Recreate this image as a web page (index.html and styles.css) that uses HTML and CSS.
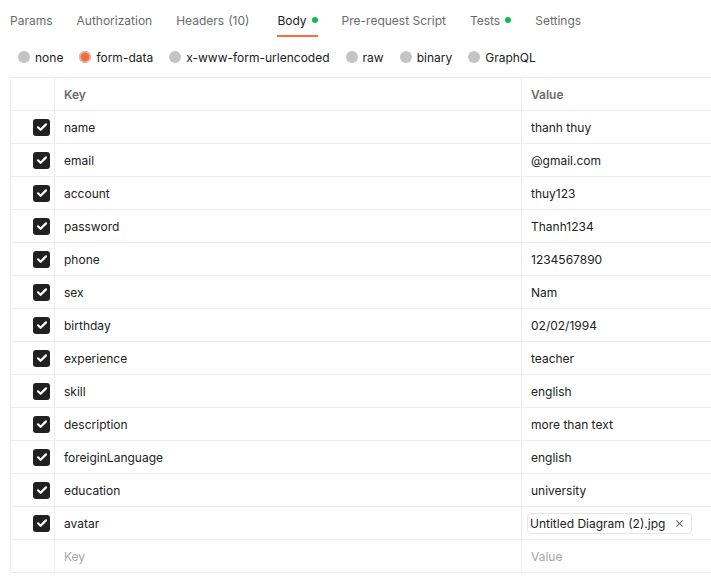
FILE: index.html
```html
<!DOCTYPE html>
<html>
<head>
<meta charset="utf-8">
<link rel="stylesheet" href="styles.css">
</head>
<body>
<div class="page">
  <nav class="tabs">
    <span class="tab">Params</span>
    <span class="tab">Authorization</span>
    <span class="tab">Headers <span class="count">(10)</span></span>
    <span class="tab active">Body<span class="dot"></span></span>
    <span class="tab">Pre-request Script</span>
    <span class="tab">Tests<span class="dot"></span></span>
    <span class="tab">Settings</span>
  </nav>
  <div class="radios">
    <span class="radio"><span class="circle"></span>none</span>
    <span class="radio"><span class="circle on"></span>form-data</span>
    <span class="radio"><span class="circle"></span>x-www-form-urlencoded</span>
    <span class="radio"><span class="circle"></span>raw</span>
    <span class="radio"><span class="circle"></span>binary</span>
    <span class="radio"><span class="circle"></span>GraphQL</span>
  </div>
  <div class="table">
    <div class="row head">
      <div class="c-check"></div>
      <div class="c-key">Key</div>
      <div class="c-val">Value</div>
    </div>
    <div class="row"><div class="c-check"><span class="cb"><svg viewBox="0 0 16 16"><path d="M4 8.3l2.6 2.5L12 5.4"/></svg></span></div><div class="c-key">name</div><div class="c-val">thanh thuy</div></div>
    <div class="row"><div class="c-check"><span class="cb"><svg viewBox="0 0 16 16"><path d="M4 8.3l2.6 2.5L12 5.4"/></svg></span></div><div class="c-key">email</div><div class="c-val">@gmail.com</div></div>
    <div class="row"><div class="c-check"><span class="cb"><svg viewBox="0 0 16 16"><path d="M4 8.3l2.6 2.5L12 5.4"/></svg></span></div><div class="c-key">account</div><div class="c-val">thuy123</div></div>
    <div class="row"><div class="c-check"><span class="cb"><svg viewBox="0 0 16 16"><path d="M4 8.3l2.6 2.5L12 5.4"/></svg></span></div><div class="c-key">password</div><div class="c-val">Thanh1234</div></div>
    <div class="row"><div class="c-check"><span class="cb"><svg viewBox="0 0 16 16"><path d="M4 8.3l2.6 2.5L12 5.4"/></svg></span></div><div class="c-key">phone</div><div class="c-val">1234567890</div></div>
    <div class="row"><div class="c-check"><span class="cb"><svg viewBox="0 0 16 16"><path d="M4 8.3l2.6 2.5L12 5.4"/></svg></span></div><div class="c-key">sex</div><div class="c-val">Nam</div></div>
    <div class="row"><div class="c-check"><span class="cb"><svg viewBox="0 0 16 16"><path d="M4 8.3l2.6 2.5L12 5.4"/></svg></span></div><div class="c-key">birthday</div><div class="c-val">02/02/1994</div></div>
    <div class="row"><div class="c-check"><span class="cb"><svg viewBox="0 0 16 16"><path d="M4 8.3l2.6 2.5L12 5.4"/></svg></span></div><div class="c-key">experience</div><div class="c-val">teacher</div></div>
    <div class="row"><div class="c-check"><span class="cb"><svg viewBox="0 0 16 16"><path d="M4 8.3l2.6 2.5L12 5.4"/></svg></span></div><div class="c-key">skill</div><div class="c-val">english</div></div>
    <div class="row"><div class="c-check"><span class="cb"><svg viewBox="0 0 16 16"><path d="M4 8.3l2.6 2.5L12 5.4"/></svg></span></div><div class="c-key">description</div><div class="c-val">more than text</div></div>
    <div class="row"><div class="c-check"><span class="cb"><svg viewBox="0 0 16 16"><path d="M4 8.3l2.6 2.5L12 5.4"/></svg></span></div><div class="c-key">foreiginLanguage</div><div class="c-val">english</div></div>
    <div class="row"><div class="c-check"><span class="cb"><svg viewBox="0 0 16 16"><path d="M4 8.3l2.6 2.5L12 5.4"/></svg></span></div><div class="c-key">education</div><div class="c-val">university</div></div>
    <div class="row"><div class="c-check"><span class="cb"><svg viewBox="0 0 16 16"><path d="M4 8.3l2.6 2.5L12 5.4"/></svg></span></div><div class="c-key">avatar</div><div class="c-val file-cell"><span class="file">Untitled Diagram (2).jpg<svg class="x" viewBox="0 0 10 10"><path d="M1.5 1.5l7 7M8.5 1.5l-7 7"/></svg></span></div></div>
    <div class="row last"><div class="c-check"></div><div class="c-key ph">Key</div><div class="c-val ph">Value</div></div>
  </div>
</div>
</body>
</html>
```

FILE: styles.css
```css
html, body {
  margin: 0;
  padding: 0;
  background: #ffffff;
  overflow: hidden;
}
body {
  font-family: Inter, "Noto Sans", "Liberation Sans", sans-serif;
  font-size: 12px;
  color: #212121;
}
.page {
  width: 711px;
  height: 585px;
  overflow: hidden;
}
.tabs {
  display: flex;
  gap: 24px;
  padding: 0 0 0 10px;
  height: 37px;
  align-items: flex-start;
}
.tab {
  display: flex;
  align-items: center;
  height: 37px;
  padding-top: 5px;
  box-sizing: border-box;
  color: #6b6b6b;
  white-space: nowrap;
  border-bottom: 2px solid transparent;
}
.tab.active {
  color: #212121;
  border-bottom-color: #ff6c37;
  margin-left: 4px;
}
.count {
  margin-left: 4px;
}
.dot {
  width: 6px;
  height: 6px;
  border-radius: 50%;
  background: #0cbb52;
  margin-left: 5px;
}
.radios {
  display: flex;
  gap: 16px;
  padding: 0 0 0 18px;
  height: 40px;
  align-items: center;
}
.radio {
  display: flex;
  align-items: center;
  color: #212121;
  white-space: nowrap;
}
.circle {
  width: 12px;
  height: 12px;
  border-radius: 50%;
  background: #c4c4c4;
  margin-right: 5px;
}
.circle.on {
  background: #ff6c37;
  box-shadow: inset 0 0 0 1.5px #c8c8c8;
}
.table {
  margin-left: 10px;
  width: 760px;
  border: 1px solid #ededed;
  border-bottom: none;
}
.row {
  display: flex;
  height: 33px;
  border-bottom: 1px solid #ededed;
  box-sizing: border-box;
}
.c-check {
  width: 44px;
  flex: none;
  border-right: 1px solid #ededed;
  display: flex;
  align-items: center;
  justify-content: flex-end;
  padding-right: 4px;
  box-sizing: border-box;
}
.c-key {
  width: 467px;
  flex: none;
  border-right: 1px solid #ededed;
  padding-left: 9px;
  display: flex;
  align-items: center;
  box-sizing: border-box;
}
.c-val {
  flex: 1;
  padding-left: 9px;
  display: flex;
  align-items: center;
}
.head .c-key, .head .c-val {
  font-weight: 600;
  color: #6b6b6b;
}
.ph {
  color: #a6a6a6;
}
.cb {
  width: 17px;
  height: 17px;
  border-radius: 3px;
  background: #212121;
  display: flex;
  align-items: center;
  justify-content: center;
}
.cb svg {
  width: 16px;
  height: 16px;
  fill: none;
  stroke: #ffffff;
  stroke-width: 2.2;
  stroke-linecap: round;
  stroke-linejoin: round;
}
.file-cell {
  padding-left: 5px;
}
.file {
  display: flex;
  align-items: center;
  height: 19px;
  border: 1px solid #e6e6e6;
  border-radius: 4px;
  padding: 0 7px 0 2px;
  color: #212121;
  white-space: nowrap;
}
.x {
  width: 9px;
  height: 9px;
  margin-left: 10px;
  fill: none;
  stroke: #6b6b6b;
  stroke-width: 1.2;
}
```
